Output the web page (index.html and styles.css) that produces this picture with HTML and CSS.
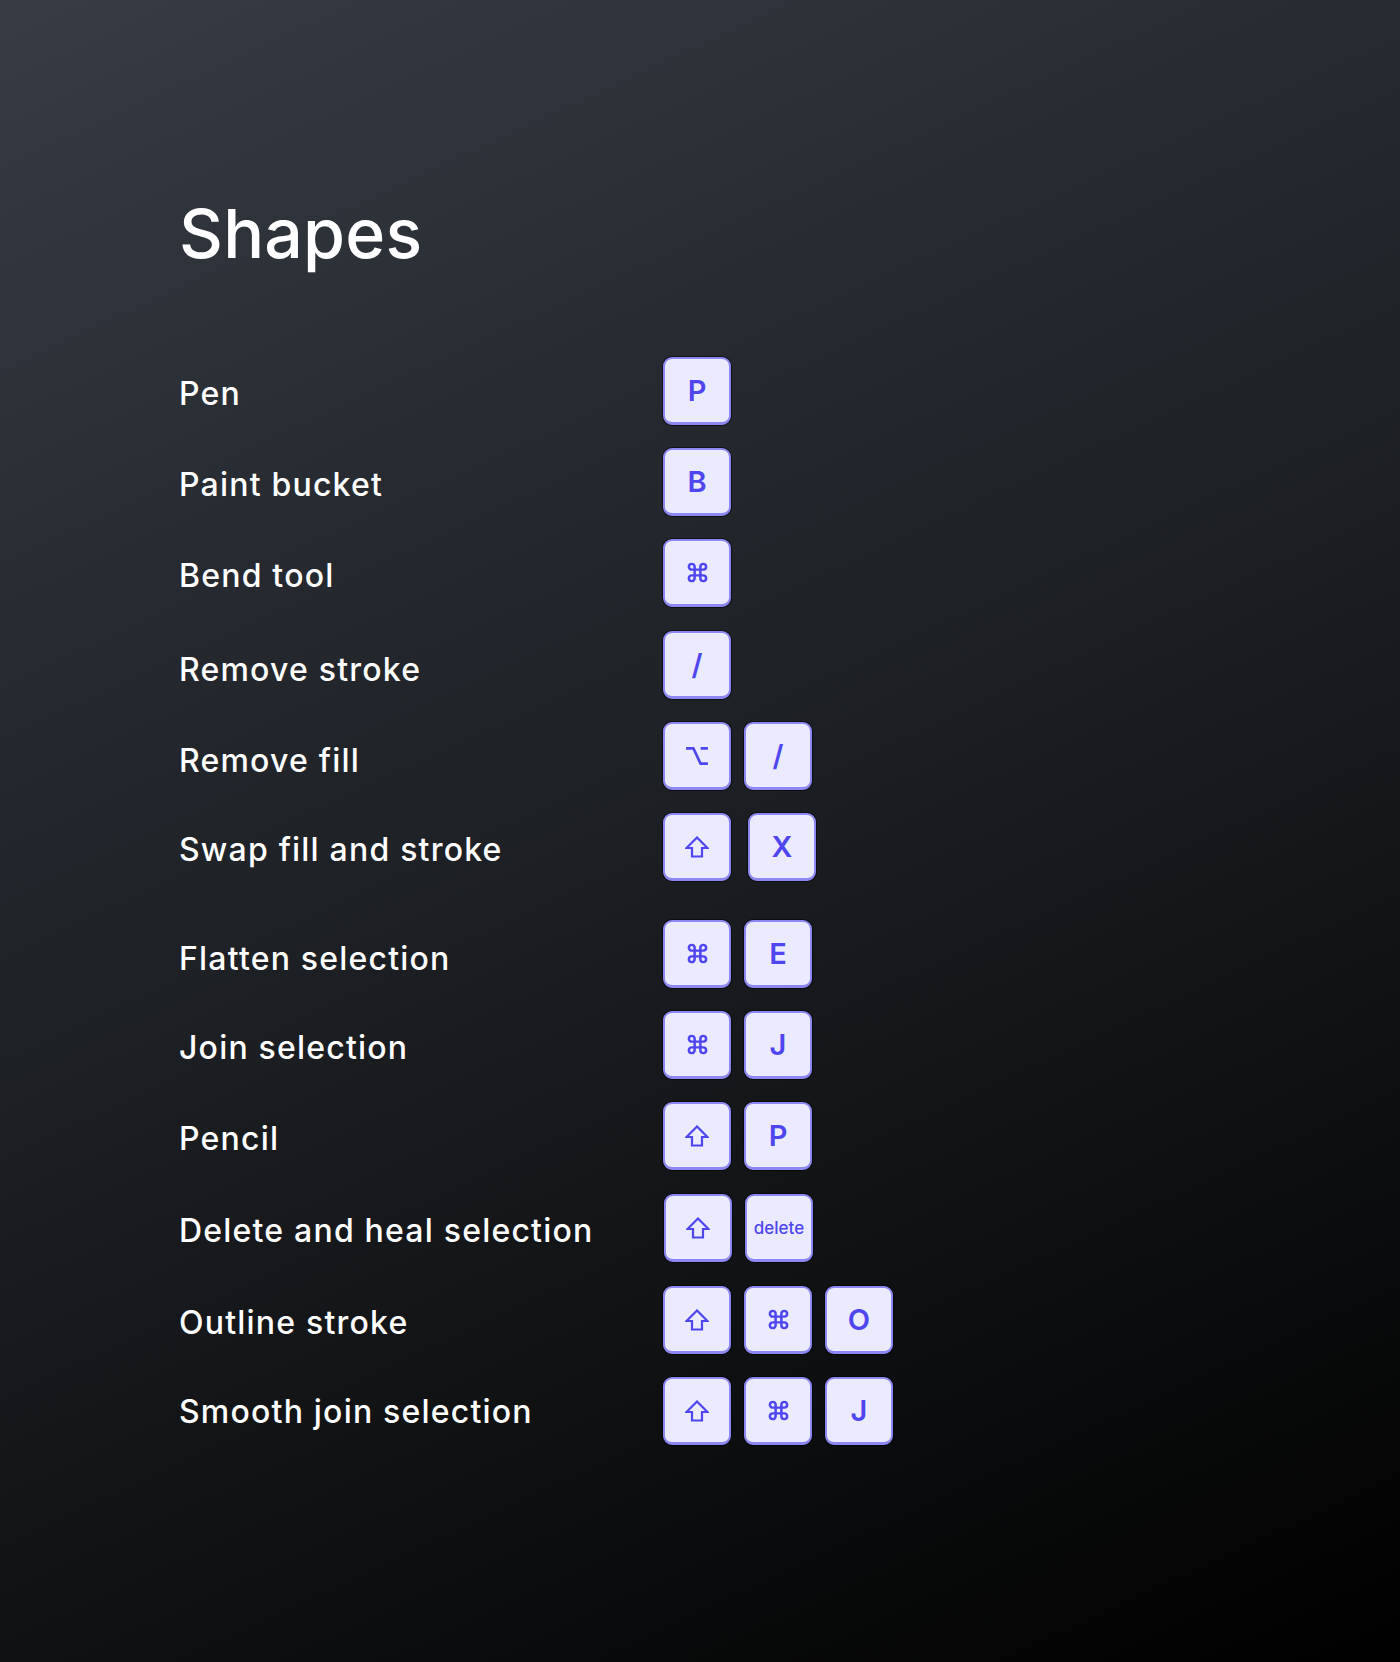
FILE: index.html
```html
<!DOCTYPE html>
<html lang="en">
<head>
  <meta charset="UTF-8" />
  <meta name="viewport" content="width=device-width, initial-scale=1.0" />
  <title>Shapes shortcuts</title>
  <link rel="stylesheet" href="styles.css">
</head>
<body>
  <main class="sheet">
    <h1 class="title">Shapes</h1>

    <ul class="shortcuts">
      <li class="row">
        <span class="label">Pen</span>
        <span class="keys"><kbd class="key">P</kbd></span>
      </li>
      <li class="row">
        <span class="label">Paint bucket</span>
        <span class="keys"><kbd class="key">B</kbd></span>
      </li>
      <li class="row">
        <span class="label">Bend tool</span>
        <span class="keys"><kbd class="key"><svg class="ico ico-cmd" viewBox="0 0 24 24"><path d="M15 6v12a3 3 0 1 0 3-3H6a3 3 0 1 0 3 3V6a3 3 0 1 0-3 3h12a3 3 0 1 0-3-3"/></svg></kbd></span>
      </li>
      <li class="row row-low">
        <span class="label label-low">Remove stroke</span>
        <span class="keys"><kbd class="key">/</kbd></span>
      </li>
      <li class="row">
        <span class="label label-low">Remove fill</span>
        <span class="keys">
          <kbd class="key"><svg class="ico ico-opt" viewBox="0 0 26 22"><path d="M1 2.5h8l8 17h8M17 2.5h8"/></svg></kbd>
          <kbd class="key">/</kbd>
        </span>
      </li>
      <li class="row">
        <span class="label">Swap fill and stroke</span>
        <span class="keys">
          <kbd class="key"><svg class="ico ico-shift" viewBox="0 0 24 22"><path d="M12 1.5 1.5 12H7v8.5h10V12h5.5z"/></svg></kbd>
          <kbd class="key key-nudge">X</kbd>
        </span>
      </li>
      <li class="row row-break">
        <span class="label label-low">Flatten selection</span>
        <span class="keys">
          <kbd class="key"><svg class="ico ico-cmd" viewBox="0 0 24 24"><path d="M15 6v12a3 3 0 1 0 3-3H6a3 3 0 1 0 3 3V6a3 3 0 1 0-3 3h12a3 3 0 1 0-3-3"/></svg></kbd>
          <kbd class="key">E</kbd>
        </span>
      </li>
      <li class="row">
        <span class="label">Join selection</span>
        <span class="keys">
          <kbd class="key"><svg class="ico ico-cmd" viewBox="0 0 24 24"><path d="M15 6v12a3 3 0 1 0 3-3H6a3 3 0 1 0 3 3V6a3 3 0 1 0-3 3h12a3 3 0 1 0-3-3"/></svg></kbd>
          <kbd class="key">J</kbd>
        </span>
      </li>
      <li class="row">
        <span class="label">Pencil</span>
        <span class="keys">
          <kbd class="key"><svg class="ico ico-shift" viewBox="0 0 24 22"><path d="M12 1.5 1.5 12H7v8.5h10V12h5.5z"/></svg></kbd>
          <kbd class="key">P</kbd>
        </span>
      </li>
      <li class="row row-low">
        <span class="label">Delete and heal selection</span>
        <span class="keys keys-shift">
          <kbd class="key"><svg class="ico ico-shift" viewBox="0 0 24 22"><path d="M12 1.5 1.5 12H7v8.5h10V12h5.5z"/></svg></kbd>
          <kbd class="key key-word">delete</kbd>
        </span>
      </li>
      <li class="row row-low">
        <span class="label">Outline stroke</span>
        <span class="keys">
          <kbd class="key"><svg class="ico ico-shift" viewBox="0 0 24 22"><path d="M12 1.5 1.5 12H7v8.5h10V12h5.5z"/></svg></kbd>
          <kbd class="key"><svg class="ico ico-cmd" viewBox="0 0 24 24"><path d="M15 6v12a3 3 0 1 0 3-3H6a3 3 0 1 0 3 3V6a3 3 0 1 0-3 3h12a3 3 0 1 0-3-3"/></svg></kbd>
          <kbd class="key">O</kbd>
        </span>
      </li>
      <li class="row">
        <span class="label label-high">Smooth join selection</span>
        <span class="keys">
          <kbd class="key"><svg class="ico ico-shift" viewBox="0 0 24 22"><path d="M12 1.5 1.5 12H7v8.5h10V12h5.5z"/></svg></kbd>
          <kbd class="key"><svg class="ico ico-cmd" viewBox="0 0 24 24"><path d="M15 6v12a3 3 0 1 0 3-3H6a3 3 0 1 0 3 3V6a3 3 0 1 0-3 3h12a3 3 0 1 0-3-3"/></svg></kbd>
          <kbd class="key">J</kbd>
        </span>
      </li>
    </ul>
  </main>
</body>
</html>
```

FILE: styles.css
```css
html, body {
  margin: 0;
  height: 100%;
}
body {
  font-family: 'Inter', 'Liberation Sans', sans-serif;
  color: #fff;
  background: linear-gradient(155deg, #373c45 0%, #262a30 30%, #16181b 60%, #0a0b0c 82%, #000 100%);
  min-height: 1662px;
}
.sheet {
  padding: 199px 0 0 179px;
}
.title {
  margin: 0;
  font-size: 68px;
  line-height: 68px;
  font-weight: 500;
  letter-spacing: 0.2px;
}
.shortcuts {
  list-style: none;
  margin: 90px 0 0;
  padding: 0;
  display: flex;
  flex-direction: column;
  gap: 23px;
}
.row {
  display: flex;
  align-items: center;
  height: 68px;
}
.row-low {
  margin-top: 1px;
}
.row-break {
  margin-top: 16px;
}
.label {
  width: 484px;
  flex: none;
  font-size: 32px;
  font-weight: 500;
  letter-spacing: 1.2px;
  padding-top: 4px;
}
.label-low {
  padding-top: 9px;
}
.label-high {
  padding-top: 0;
}
.keys {
  display: flex;
  gap: 13px;
}
.keys-shift {
  margin-left: 1px;
}
.key {
  box-sizing: border-box;
  width: 68px;
  height: 68px;
  display: flex;
  align-items: center;
  justify-content: center;
  background-color: #ebeafe;
  border: 2px solid #8d87f2;
  border-bottom-width: 3px;
  border-radius: 9px;
  box-shadow: 0 0 0 1px rgba(0, 0, 0, 0.55);
  color: #4f46ef;
  font-family: 'Inter', 'Liberation Sans', sans-serif;
  font-size: 29px;
  font-weight: 600;
}
.key-nudge {
  margin-left: 4px;
}
.key-word {
  font-size: 17px;
  font-weight: 500;
}
.ico {
  fill: none;
  stroke: #4f46ef;
  stroke-linecap: butt;
  stroke-linejoin: miter;
}
.ico-cmd {
  width: 23px;
  height: 23px;
  stroke-width: 2.6;
}
.ico-opt {
  width: 24px;
  height: 20px;
  stroke-width: 3;
}
.ico-shift {
  width: 24px;
  height: 22px;
  stroke-width: 2.2;
}
```
